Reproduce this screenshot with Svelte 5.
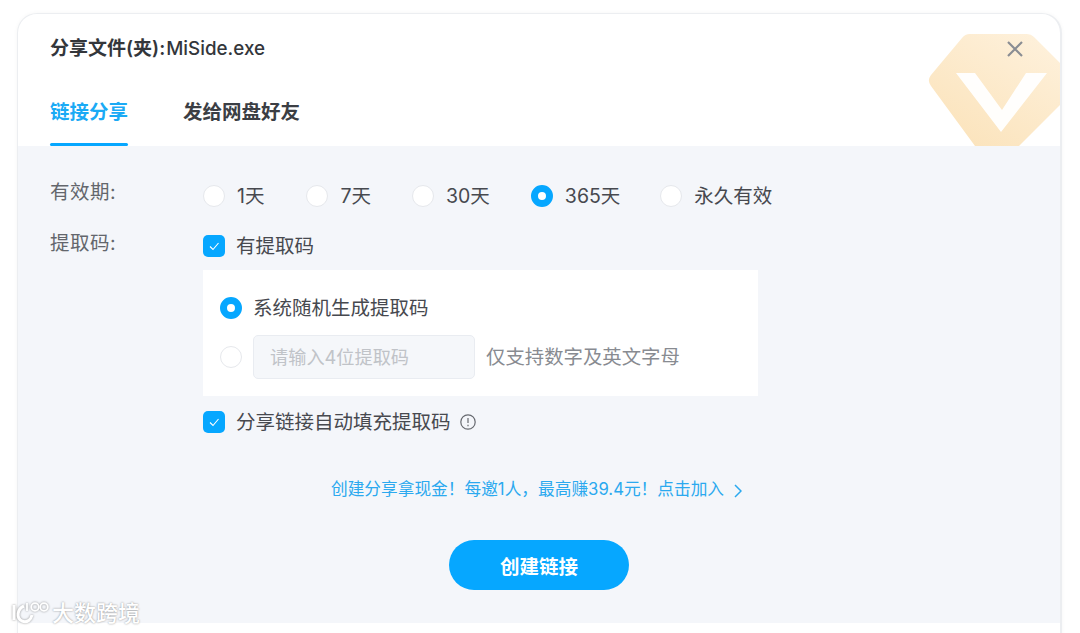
<script>
  const periods = [
    { label: '1天', gap: 42 },
    { label: '7天', gap: 41 },
    { label: '30天', gap: 41 },
    { label: '365天', gap: 40, on: true },
    { label: '永久有效', gap: 0 }
  ];
</script>

<div class="page">
  <div class="card">
    <header class="head">
      <svg class="gem" viewBox="0 0 134 112" aria-hidden="true">
        <defs>
          <linearGradient id="g" x1="0.2" y1="1" x2="0.9" y2="0">
            <stop offset="0" stop-color="#fbe3bb" />
            <stop offset="1" stop-color="#fef1dc" />
          </linearGradient>
        </defs>
        <path d="M44 0H100a10 10 0 0 1 7 3L134 30V70L92 112H48L4 52a9 9 0 0 1 0-11L35 4a11 11 0 0 1 9-4Z" fill="url(#g)" />
        <path d="M29 39H48L75 76 99 39H120L74 98Z" fill="#fff" opacity="0.95" />
      </svg>
      <svg class="close" viewBox="0 0 16 16" aria-hidden="true">
        <path d="M1 1 15 15M15 1 1 15" stroke="#8a8d93" stroke-width="2.200" fill="none" />
      </svg>
      <h1 class="title">分享文件(夹):<span class="file">MiSide.exe</span></h1>
      <nav class="tabs">
        <span class="tab active">链接分享</span>
        <span class="tab">发给网盘好友</span>
      </nav>
    </header>

    <main class="body">
      <div class="row first">
        <div class="label up">有效期:</div>
        <div class="periods">
          {#each periods as p}
            <span class="opt" style="margin-right:{p.gap}px">
              <span class="radio" class:on={p.on}></span>{p.label}
            </span>
          {/each}
        </div>
      </div>

      <div class="row second">
        <div class="label">提取码:</div>
        <div class="code">
          <div class="opt">
            <span class="check"><svg viewBox="0 0 12 12"><path d="M2 6.500 5 9.500 10.500 3" /></svg></span>有提取码
          </div>
          <div class="panel">
            <div class="opt sys"><span class="radio on"></span>系统随机生成提取码</div>
            <div class="custom">
              <span class="radio"></span>
              <div class="input">请输入4位提取码</div>
              <span class="hint">仅支持数字及英文字母</span>
            </div>
          </div>
          <div class="opt">
            <span class="check"><svg viewBox="0 0 12 12"><path d="M2 6.500 5 9.500 10.500 3" /></svg></span>分享链接自动填充提取码
            <svg class="info" viewBox="0 0 16 16">
              <circle cx="8" cy="8" r="7.200" />
              <path d="M8 4v5M8 10.800v1.400" />
            </svg>
          </div>
        </div>
      </div>

      <div class="promo">
        <span>创建分享拿现金&#xFF01;每邀1人&#xFF0C;最高赚39.4元&#xFF01;点击加入</span>
        <svg viewBox="0 0 8 14"><path d="M1 1 7 7 1 13" /></svg>
      </div>

      <div class="action"><button class="create">创建链接</button></div>
    </main>
    <div class="foot"></div>
  </div>

  <div class="mark">
    <svg viewBox="0 0 40 26" aria-hidden="true">
      <path d="M5 5V20M15 6C8 9 7 18 13 21 18 23 22 20 23 15" />
      <path class="thin" d="M18 3V11" />
      <circle class="thin" cx="26" cy="7" r="3.800" />
      <circle class="thin" cx="35" cy="7" r="3.800" />
    </svg>
    <span>大数跨境</span>
  </div>
</div>

<style>
  :global(body) {
    margin: 0;
    background: #fff;
    font-family: Inter, "Noto Sans CJK SC", sans-serif;
  }
  .page {
    position: relative;
    width: 1080px;
    height: 633px;
    overflow: hidden;
    padding-top: 13px;
    box-sizing: border-box;
  }
  .card {
    width: 1045px;
    margin-left: 17px;
    height: 640px;
    border-radius: 20px;
    overflow: hidden;
    background: #fff;
    box-sizing: border-box;
    border: 1px solid #eceef1;
    border-right-width: 2px;
    box-shadow: 0 0 4px rgba(0, 0, 0, 0.04);
    display: flex;
    flex-direction: column;
  }
  .head {
    position: relative;
    height: 132px;
    flex: none;
    padding: 21px 0 0 32px;
    box-sizing: border-box;
  }
  .title {
    position: relative;
    margin: 0;
    font-size: 19px;
    line-height: 28px;
    font-weight: 600;
    color: #33363b;
  }
  .file {
    font-weight: 500;
    font-size: 18.800px;
    margin-left: 1px;
  }
  .tabs {
    position: relative;
    display: flex;
    gap: 55px;
    margin-top: 34px;
  }
  .tab {
    font-size: 19.500px;
    font-weight: 700;
    line-height: 30px;
    color: #3b3e44;
    height: 30px;
  }
  .active {
    color: #1aaaf5;
    position: relative;
  }
  .active::after {
    content: "";
    position: absolute;
    left: 0;
    right: 0;
    top: 46px;
    height: 3px;
    border-radius: 2px;
    background: #06a7ff;
  }
  .gem {
    position: absolute;
    right: -1px;
    top: 20px;
    width: 134px;
    height: 112px;
  }
  .close {
    position: absolute;
    right: 37px;
    top: 27px;
    width: 16px;
    height: 16px;
  }
  .body {
    position: relative;
    flex: none;
    height: 477px;
    background: #f4f6fa;
    padding: 36px 0 0 32px;
    box-sizing: border-box;
  }
  .foot {
    flex: 1;
    background: #fff;
  }
  .row {
    display: flex;
  }
  .second {
    margin-top: 20px;
  }
  .label {
    width: 153px;
    flex: none;
    margin-top: 1px;
    font-size: 19.500px;
    letter-spacing: 0.500px;
    line-height: 24px;
    color: #63666c;
  }
  .label.up {
    margin-top: -2px;
  }
  .periods {
    display: flex;
    height: 28px;
  }
  .opt {
    display: flex;
    align-items: center;
    font-size: 19.500px;
    line-height: 28px;
    color: #47494f;
  }
  .sys {
    position: relative;
    line-height: 30px;
  }
  .radio {
    width: 20px;
    height: 20px;
    flex: none;
    margin-right: 12px;
    border-radius: 50%;
    background: #fff;
    border: 1px solid #e6e8ec;
  }
  .radio.on {
    width: 8px;
    height: 8px;
    border: 7px solid #06a7ff;
  }
  .sys .radio {
    margin-right: 11px;
  }
  .check {
    width: 22px;
    height: 22px;
    flex: none;
    margin-right: 11px;
    border-radius: 5px;
    background: #06a7ff;
    display: flex;
    align-items: center;
    justify-content: center;
  }
  .check svg {
    width: 12px;
    height: 12px;
    fill: none;
    stroke: #fff;
    stroke-width: 1.100;
  }
  .code {
    display: flex;
    flex-direction: column;
    padding-top: 2px;
  }
  .panel {
    width: 555px;
    height: 126px;
    margin: 10px 0 12px;
    background: #fff;
    padding: 23px 0 0 17px;
    box-sizing: border-box;
  }
  .custom {
    display: flex;
    align-items: center;
    margin-top: 12px;
  }
  .custom .radio {
    margin-right: 11px;
  }
  .input {
    width: 222px;
    height: 44px;
    box-sizing: border-box;
    background: #f5f7fa;
    border: 1px solid #e9ecf1;
    border-radius: 5px;
    padding-left: 16px;
    font-size: 18.200px;
    line-height: 42px;
    color: #c0c3c8;
  }
  .hint {
    margin: 0 0 4px 11px;
    font-size: 19.400px;
    color: #888b91;
  }
  .info {
    width: 16px;
    height: 16px;
    margin-left: 9px;
    fill: none;
    stroke: #66696f;
    stroke-width: 1.200;
  }
  .promo {
    margin-top: 41px;
    margin-left: 281px;
    display: flex;
    align-items: center;
    font-size: 16.700px;
    line-height: 24px;
    color: #2ba9ef;
  }
  .promo svg {
    width: 8px;
    height: 14px;
    margin-left: 10px;
    margin-top: 3px;
    fill: none;
    stroke: #2ba9ef;
    stroke-width: 1.500;
  }
  .action {
    display: flex;
    justify-content: center;
    margin-top: 39px;
    padding-right: 32px;
  }
  .create {
    width: 180px;
    height: 50px;
    border: 0;
    padding: 1px 0 0;
    border-radius: 25px;
    background: #06a7ff;
    color: #fff;
    font: 700 19.500px "Noto Sans CJK SC", sans-serif;
  }
  .mark {
    position: absolute;
    left: 9px;
    top: 598px;
    display: flex;
    align-items: center;
    gap: 3px;
    color: #fff;
    text-shadow: 0 0 2px rgba(0, 0, 0, 0.45);
    font-size: 22px;
    font-weight: 500;
    line-height: 30px;
  }
  .mark svg {
    width: 40px;
    height: 26px;
    fill: none;
    stroke: #fff;
    stroke-width: 3;
    filter: drop-shadow(0 0 1px rgba(0, 0, 0, 0.4));
  }
  .mark .thin {
    stroke-width: 1.800;
  }
</style>
